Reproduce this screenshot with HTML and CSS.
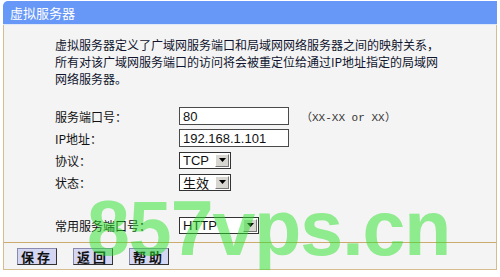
FILE: index.html
```html
<!DOCTYPE html>
<html lang="zh-CN">
<head>
  <meta charset="UTF-8" />
  <title>虚拟服务器</title>
  <link rel="stylesheet" href="styles.css">
</head>
<body>
  <div class="panel">
    <div class="title">虚拟服务器</div>
    <div class="content">
      <p class="intro">虚拟服务器定义了广域网服务端口和局域网网络服务器之间的映射关系，<br>所有对该广域网服务端口的访问将会被重定位给通过IP地址指定的局域网<br>网络服务器。</p>

      <div class="rows">
        <div class="row">
          <span class="label">服务端口号：</span>
          <input class="text" type="text" value="80">
          <span class="hint">（XX-XX or XX）</span>
        </div>
        <div class="row">
          <span class="label">IP地址：</span>
          <input class="text" type="text" value="192.168.1.101">
        </div>
        <div class="row">
          <span class="label">协议：</span>
          <div class="combo small"><span class="val">TCP</span><span class="btn"><svg width="7" height="4" viewBox="0 0 7 4"><path d="M0 0h7L3.5 4z" fill="#000"/></svg></span></div>
        </div>
        <div class="row">
          <span class="label">状态：</span>
          <div class="combo small"><span class="val">生效</span><span class="btn"><svg width="7" height="4" viewBox="0 0 7 4"><path d="M0 0h7L3.5 4z" fill="#000"/></svg></span></div>
        </div>
        <div class="row common">
          <span class="label">常用服务端口号：</span>
          <div class="combo wide"><span class="val">HTTP</span><span class="btn"><svg width="7" height="4" viewBox="0 0 7 4"><path d="M0 0h7L3.5 4z" fill="#000"/></svg></span></div>
        </div>
      </div>
    </div>
    <div class="footer">
      <button>保存</button>
      <button>返回</button>
      <button>帮助</button>
    </div>
    <div class="mark">857vps.cn</div>
  </div>
</body>
</html>
```

FILE: styles.css
```css
body {
  margin: 0;
  background: #fff;
  font-family: "Noto Sans CJK SC", sans-serif;
  font-size: 12px;
  color: #111;
}
.panel {
  position: relative;
  width: 494px;
  margin: 1px 0 0 3px;
  overflow: hidden;
}
.title {
  height: 23px;
  line-height: 23px;
  padding-left: 7px;
  background: #6797f7;
  color: #fff;
  font-size: 13px;
  border-top-left-radius: 5px;
  border-bottom: 1px solid #dfe8f8;
}
.content {
  background: #f4f4f4;
  border-left: 1px solid #d6bd8f;
  border-right: 1px solid #d6bd8f;
  padding: 11px 0 6px 51px;
  border-bottom: 1px solid #cdaa6e;
}
.intro {
  margin: 0 0 18px;
  line-height: 17px;
  color: #10142e;
}
.row {
  display: flex;
  align-items: center;
  height: 22px;
}
.label {
  width: 124px;
}
.text {
  box-sizing: border-box;
  width: 110px;
  height: 18px;
  padding: 0 3px;
  border: 1px solid #4a4a4a;
  background: #fff;
  font-family: "Liberation Sans", sans-serif;
  font-size: 13px;
  color: #111;
}
.hint {
  margin-left: 12px;
  font-family: "Liberation Mono", monospace;
  font-size: 11px;
  color: #333;
}
.combo {
  box-sizing: border-box;
  display: flex;
  align-items: center;
  justify-content: space-between;
  height: 17px;
  border: 1px solid #333;
  background: #fff;
  padding: 0 1px 0 3px;
  font-family: "Liberation Sans", "Noto Sans CJK SC", sans-serif;
  font-size: 13px;
}
.combo.small { width: 52px; }
.combo.wide { width: 80px; }
.combo .btn {
  box-sizing: border-box;
  display: flex;
  align-items: center;
  justify-content: center;
  width: 14px;
  height: 13px;
  background: #d8d6d0;
  border: 1px solid #fff;
  border-right-color: #777;
  border-bottom-color: #777;
}
.row.common {
  margin-top: 21px;
}
.footer {
  display: flex;
  gap: 16px;
  background: #f4f4f4;
  border: 1px solid #d6bd8f;
  border-top: none;
  padding: 5px 0 4px 13px;
}
.footer button {
  width: 40px;
  height: 17px;
  padding: 0;
  background: #d4d6f2;
  border: 1px solid #333;
  border-top-color: #8a8ab0;
  border-left-color: #8a8ab0;
  font-family: "Noto Sans CJK SC", sans-serif;
  font-size: 13px;
  font-weight: bold;
  letter-spacing: 3px;
  line-height: 15px;
  color: #111;
}
.mark {
  position: absolute;
  left: 84px;
  top: 189px;
  font-family: "Liberation Sans", sans-serif;
  font-size: 77px;
  line-height: 1;
  font-weight: bold;
  letter-spacing: -1px;
  color: rgba(40, 225, 40, 0.5);
  pointer-events: none;
  white-space: nowrap;
}
```
